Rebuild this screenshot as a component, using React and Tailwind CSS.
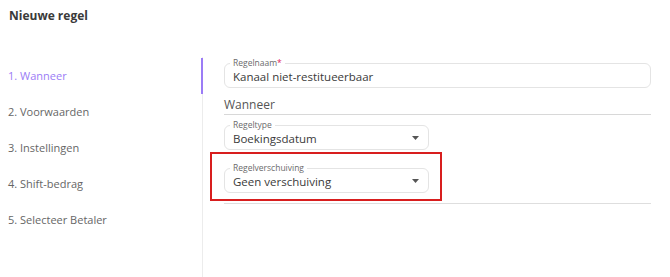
import React from "react";

function Caret() {
  return (
    <svg width="7" height="4" viewBox="0 0 7 4" className="shrink-0">
      <path d="M0 0 L7 0 L3.5 4 Z" fill="#555" />
    </svg>
  );
}

function Field({ label, value, required, select, className = "" }) {
  return (
    <div className={`relative h-[25px] rounded-[6px] border border-[#e4e4e4] flex items-center pl-[8px] pr-[9px] ${className}`}>
      <span className="absolute left-[5px] -top-[6px] bg-white px-[3px] text-[8.5px] leading-[10px] text-[#6b6b6b]">
        {label}
        {required && <span className="text-[#e0245e]">*</span>}
      </span>
      <span className="flex-1 text-[11.5px] text-[#3a3a3a] leading-none pt-[2px]">{value}</span>
      {select && <Caret />}
    </div>
  );
}

export default function App() {
  return (
    <div className="w-[670px] h-[277px] bg-white overflow-hidden font-['Open_Sans',sans-serif] flex flex-col">
      <div className="pl-[9px] pt-[7px] h-[57px] text-[12px] font-bold text-[#3a3a3a]">Nieuwe regel</div>
      <div className="flex flex-1">
        <div className="w-[203px] border-r border-[#ececec] flex flex-col pt-[1px]">
          {["1. Wanneer", "2. Voorwaarden", "3. Instellingen", "4. Shift-bedrag", "5. Selecteer Betaler"].map((t, i) => (
            <div
              key={t}
              className={`h-[36px] flex items-center pl-[8px] text-[11px] ${i === 0 ? "text-[#9b7cf6] border-r-[2px] border-[#9b7cf6] -mr-[1px]" : "text-[#666]"}`}
            >
              {t}
            </div>
          ))}
        </div>
        <div className="flex-1 pl-[21px] pr-[19px] pt-[6px]">
          <Field label="Regelnaam" required value="Kanaal niet-restitueerbaar" />
          <div className="h-[27px] flex items-end pb-0 text-[12px] text-[#555] border-b border-[#d8d8d8]">Wanneer</div>
          <Field label="Regeltype" value="Boekingsdatum" select className="mt-[10px] w-[205px]" />
          <div className="-ml-[14px] w-[232px] mt-[2px] border-2 border-solid border-[#d81e1e] pt-[14px] pb-[6px] pl-[12px]">
            <Field label="Regelverschuiving" value="Geen verschuiving" select className="w-[205px]" />
          </div>
          <div className="mt-[2px] h-px bg-[#dedede]" />
        </div>
      </div>
    </div>
  );
}
